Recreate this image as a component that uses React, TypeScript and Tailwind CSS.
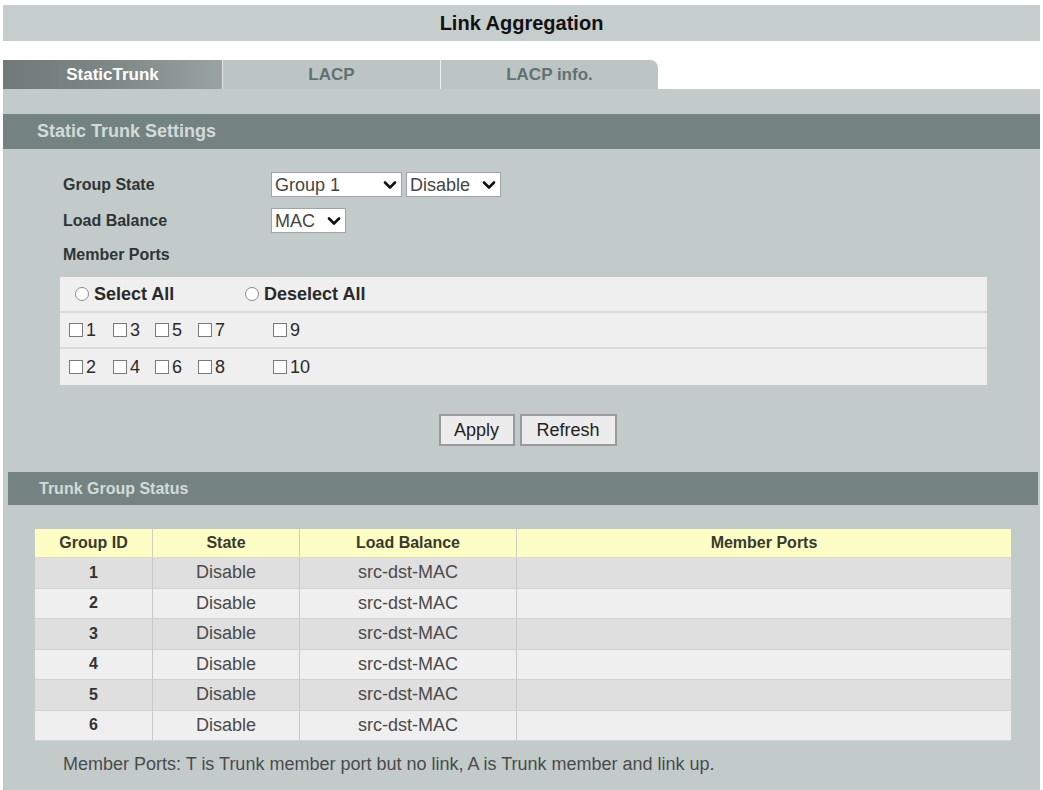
import React from "react";

const Chevron = () => (
  <svg width="14" height="10" viewBox="0 0 14 10" className="shrink-0">
    <polyline points="2,2.5 7,7.5 12,2.5" fill="none" stroke="#111" strokeWidth="2.6" strokeLinecap="round" strokeLinejoin="round" />
  </svg>
);

const Select = ({ label, w }: { label: string; w: string }) => (
  <div className={`${w} h-[25px] bg-white border border-[#9ea5a5] flex items-center justify-between pl-[3px] pr-[4px] text-[18px] font-normal text-[#444] leading-none`}>
    <span>{label}</span>
    <Chevron />
  </div>
);

const Box = () => <span className="inline-block w-[14px] h-[14px] border border-[#7a7a7a] bg-white mr-[3px]" />;
const Radio = () => <span className="inline-block w-[14px] h-[14px] rounded-full border border-[#8a8a8a] bg-white mr-[5px]" />;

const Cb = ({ n, cls }: { n: string; cls: string }) => (
  <span className={`flex items-center ${cls}`}>
    <Box />
    <span>{n}</span>
  </span>
);

const rows = [1, 2, 3, 4, 5, 6];

export default function App() {
  return (
    <div className="w-[1043px] h-[790px] bg-white px-[3px] overflow-hidden" style={{ fontFamily: '"Liberation Sans", Arial, sans-serif' }}>
      <div className="mt-[5px] h-[36px] bg-[#c6cdcd] flex items-center justify-center font-bold text-[20px] text-[#111]">
        Link Aggregation
      </div>
      <div className="h-[19px]" />
      <div className="flex h-[29px] text-[17px] font-bold">
        <div className="w-[219px] flex items-center justify-center text-white bg-gradient-to-r from-[#6f7a79] via-[#7c8786] to-[#9aa3a2]">StaticTrunk</div>
        <div className="w-[218px] flex items-center justify-center text-[#627171] bg-[#bcc5c4] border-l border-[#dfe4e4]">LACP</div>
        <div className="w-[218px] flex items-center justify-center text-[#627171] bg-[#bcc5c4] border-l border-[#eef1f1] rounded-tr-[8px]">LACP info.</div>
      </div>
      <div className="w-[1037px] h-[701px] bg-[#c2cbca] pt-[25px]">
        <div className="h-[35px] bg-[#748381] flex items-center pl-[34px] text-[18px] font-bold text-[#d3dada]">Static Trunk Settings</div>
        <div className="pl-[57px] pt-[23px] text-[16px] font-bold text-[#2f3535]">
          <div className="flex items-center h-[25px]">
            <div className="w-[211px] pl-[3px]">Group State</div>
            <Select label="Group 1" w="w-[131px]" />
            <div className="w-[4px]" />
            <Select label="Disable" w="w-[95px]" />
          </div>
          <div className="flex items-center h-[25px] mt-[11px]">
            <div className="w-[211px] pl-[3px]">Load Balance</div>
            <Select label="MAC" w="w-[75px]" />
          </div>
          <div className="h-[22px] mt-[11px] pl-[3px] flex items-center">Member Ports</div>
          <div className="mt-[11px] w-[927px] bg-[#efefef] text-[#2a2a2a]">
            <div className="h-[36px] flex items-center border-b-2 border-[#dadada] text-[18px]">
              <span className="flex items-center w-[185px] pl-[15px]"><Radio />Select All</span>
              <span className="flex items-center"><Radio />Deselect All</span>
            </div>
            <div className="h-[36px] flex items-center border-b-2 border-[#dadada] text-[18px] font-normal pl-[9px]">
              <Cb n="1" cls="w-[44px]" />
              <Cb n="3" cls="w-[42px]" />
              <Cb n="5" cls="w-[43px]" />
              <Cb n="7" cls="w-[75px]" />
              <Cb n="9" cls="" />
            </div>
            <div className="h-[36px] flex items-center text-[18px] font-normal pl-[9px]">
              <Cb n="2" cls="w-[44px]" />
              <Cb n="4" cls="w-[42px]" />
              <Cb n="6" cls="w-[43px]" />
              <Cb n="8" cls="w-[75px]" />
              <Cb n="10" cls="" />
            </div>
          </div>
        </div>
        <div className="flex justify-center gap-[5px] mt-[29px] pl-[12px] text-[18px] text-[#222]">
          <button className="w-[76px] h-[32px] bg-[#ececec] border-2 border-[#9a9a9a]">Apply</button>
          <button className="w-[97px] h-[32px] bg-[#ececec] border-2 border-[#9a9a9a]">Refresh</button>
        </div>
        <div className="mt-[26px] ml-[5px] w-[1030px] h-[33px] bg-[#748381] flex items-center pl-[31px] text-[16px] font-bold text-[#d3dada]">Trunk Group Status</div>
        <div className="mt-[24px] ml-[32px] w-[976px]">
          <div className="flex h-[29px] bg-[#fdfdc6] font-bold text-[16px] text-[#3a3a2a] border-b border-[#e0dcc0]">
            <div className="w-[118px] flex items-center justify-center border-r border-[#cfcfbf]">Group ID</div>
            <div className="w-[147px] flex items-center justify-center border-r border-[#cfcfbf]">State</div>
            <div className="w-[217px] flex items-center justify-center border-r border-[#cfcfbf]">Load Balance</div>
            <div className="flex-1 flex items-center justify-center">Member Ports</div>
          </div>
          {rows.map((r) => (
            <div key={r} className={`flex h-[30.5px] border-b border-[#d2d2d2] ${r % 2 === 1 ? "bg-[#dfdfdf]" : "bg-[#efefef]"}`}>
              <div className="w-[118px] flex items-center justify-center border-r border-[#c8c8c8] font-bold text-[16px] text-[#333]">{r}</div>
              <div className="w-[147px] flex items-center justify-center border-r border-[#c8c8c8] text-[18px] text-[#4a4a4a]">Disable</div>
              <div className="w-[217px] flex items-center justify-center border-r border-[#c8c8c8] text-[18px] text-[#4a4a4a]">src-dst-MAC</div>
              <div className="flex-1" />
            </div>
          ))}
        </div>
        <div className="mt-[10px] pl-[60px] text-[18px] text-[#4a4a4a]">
          Member Ports: T is Trunk member port but no link, A is Trunk member and link up.
        </div>
      </div>
    </div>
  );
}
